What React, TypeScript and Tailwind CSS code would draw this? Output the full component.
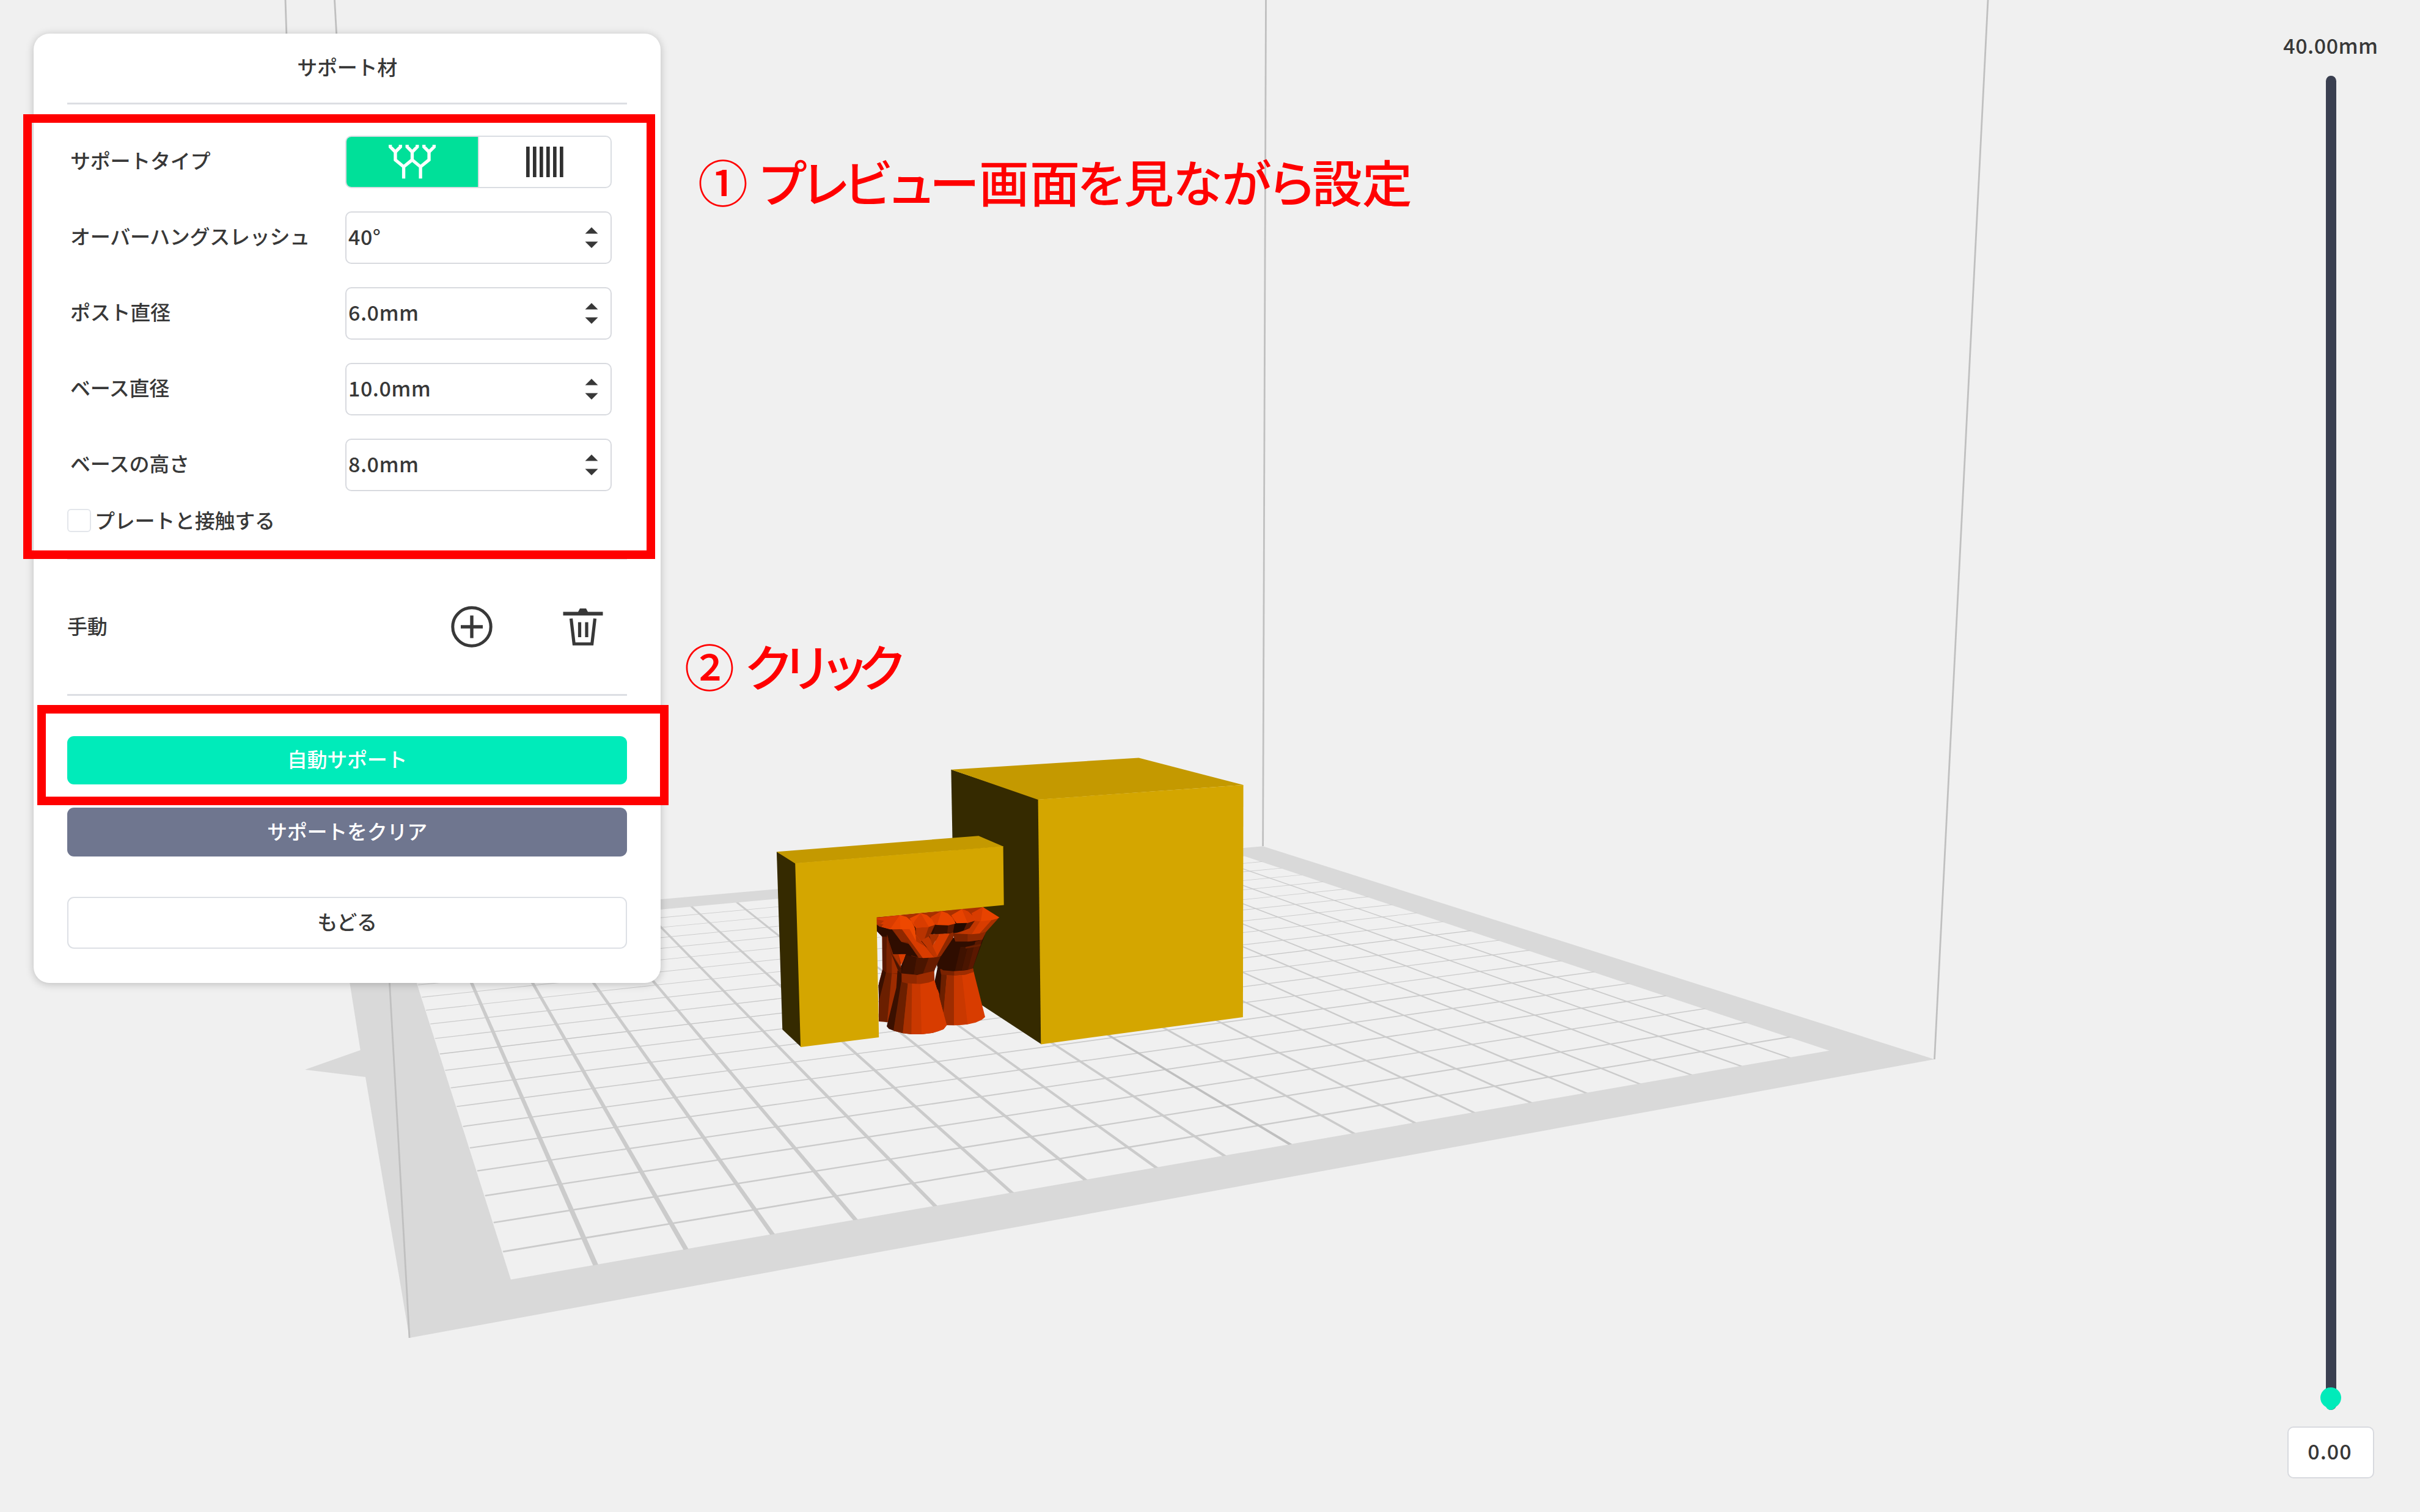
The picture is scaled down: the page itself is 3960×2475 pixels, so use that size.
import React from "react";

type Pt = [number, number];

/* ---------- Build plate perspective ---------- */

const FRONT_LEFT: Pt = [835.9, 2094.4];
const FRONT_RIGHT: Pt = [2993.4, 1719.7];
const BACK_LEFT: Pt = [656, 1527.6];
const BACK_RIGHT: Pt = [2036.4, 1401.6];

/* Foreshortening along the front edge and along the depth axis. */
const G = 0.4382;
const H = 0.8667;

/** Maps grid coordinates (centre line = 0, pitch = 1) to screen positions. */
function plate(u: number, v: number): Pt {
  const s = (u + 9.9) / 19.757;
  const t = (v + 9.88) / 19.76;
  const w = G * s + H * t + 1;
  const axis = (i: 0 | 1) =>
    ((FRONT_RIGHT[i] - FRONT_LEFT[i] + G * FRONT_RIGHT[i]) * s +
      (BACK_LEFT[i] - FRONT_LEFT[i] + H * BACK_LEFT[i]) * t +
      FRONT_LEFT[i]) /
    w;
  return [axis(0), axis(1)];
}

const poly = (...pts: Pt[]) =>
  pts.map(([x, y]) => `${x.toFixed(1)},${y.toFixed(1)}`).join(" ");

const HALF = 0.028;
const EDGE = 9.89;
const STEPS = Array.from({ length: 19 }, (_, i) => i - 9);

function Grid() {
  return (
    <g>
      {STEPS.map((s) => (
        <polygon
          key={`h${s}`}
          fill={s === 0 ? "#c4c4c4" : "#cbcbcb"}
          points={poly(
            plate(-EDGE, s - HALF),
            plate(EDGE, s - HALF),
            plate(EDGE, s + HALF),
            plate(-EDGE, s + HALF)
          )}
        />
      ))}
      {STEPS.map((s) => (
        <polygon
          key={`v${s}`}
          fill={s === 0 ? "#bfbfbf" : "#cbcbcb"}
          points={poly(
            plate(s - HALF, -EDGE),
            plate(s + HALF, -EDGE),
            plate(s + HALF, EDGE),
            plate(s - HALF, EDGE)
          )}
        />
      ))}
    </g>
  );
}

/* ---------- Tree supports under the arch ---------- */

const SUPPORT_SHAPES: [string, string][] = [
  ["#a83000", "42,94 565,42 610,106 560,190 430,190 300,150 42,140"],
  // rear left column
  ["#7a2200", "42,130 100,170 160,260 165,400 130,612 54,606 54,420 72,350 70,190 42,160"],
  ["#2f0d00", "42,130 95,165 92,240 74,350 72,190 42,160"],
  ["#5a1800", "72,190 92,190 92,365 74,350"],
  ["#7a2200", "92,190 118,280 118,370 92,366"],
  ["#9e2c00", "118,275 150,350 148,370 118,370"],
  ["#3a1000", "74,350 90,366 56,520 52,430"],
  ["#6b1f00", "90,366 118,370 98,608 54,604 56,500"],
  ["#9e2c00", "118,370 148,374 140,470 100,610 95,608"],
  // rear right column
  ["#2f0d00", "345,330 372,350 372,500 360,520 328,410"],
  ["#d83c00", "345,350 515,342 576,584 560,598 530,611 490,620 440,625 370,624 340,470"],
  ["#5a1800", "345,350 362,357 372,470 368,500 335,430"],
  ["#6b1f00", "362,357 390,359 372,570 350,480"],
  ["#9e2c00", "390,357 424,357 423,625 370,624 375,520"],
  ["#c93800", "424,357 460,355 490,620 423,625"],
  ["#2f0d00", "345,345 362,352 354,480 330,410"],
  ["#7a2200", "355,350 420,357 515,338 520,362 480,376 420,380 360,376"],
  ["#9e2c00", "424,357 515,340 520,362 480,376 424,380"],
  ["#2f0d00", "330,180 420,195 575,180 515,345 480,355 420,359 370,355 340,335"],
  ["#3f1200", "455,240 490,240 460,356 428,357"],
  ["#4a1500", "490,240 530,225 495,352 460,356"],
  ["#5a1800", "528,214 562,205 515,345 492,352"],
  ["#6b1f00", "480,240 556,226 552,236 480,248"],
  ["#7a2200", "415,172 500,178 582,165 562,205 500,214 430,214"],
  ["#8f2800", "490,176 582,163 562,205 490,214"],
  ["#3a1000", "310,125 430,120 430,172 360,178 300,176"],
  ["#5a1800", "395,125 432,120 424,168 390,174"],
  ["#240a00", "428,115 528,112 500,150 440,170 418,172"],
  ["#5a1800", "490,115 528,112 500,148 470,160"],
  ["#c03600", "528,108 560,108 510,178 420,174 455,168 500,148"],
  ["#d83c00", "555,108 612,104 550,174 510,178"],
  ["#a83000", "612,104 645,95 582,165 550,174"],
  // front branches
  ["#2f0d00", "65,140 180,145 330,130 310,250 340,290 330,345 326,362 240,385 165,380 160,340 175,305 185,275 125,275 95,180 60,175 42,150"],
  ["#4a1500", "95,190 120,280 165,350 165,375 148,355 118,280"],
  ["#a83000", "122,275 150,275 164,345"],
  ["#d83c00", "150,275 188,275 165,330"],
  ["#3a1000", "185,280 240,292 225,377 165,372"],
  ["#4a1500", "240,290 300,292 272,374 225,377"],
  ["#661c00", "300,290 360,282 325,360 270,374"],
  ["#7a2200", "115,150 150,150 258,294 215,285 165,215"],
  ["#8f2800", "120,152 150,150 225,215 165,215"],
  ["#2f0d00", "100,200 165,215 200,225 262,294 185,275 125,275"],
  ["#8f2800", "150,150 180,154 285,294 250,294"],
  ["#b83300", "235,142 325,136 300,190 275,210 238,212"],
  ["#8f2800", "300,140 330,132 305,185 275,210"],
  ["#d83c00", "165,150 210,148 328,292 270,295"],
  ["#b83300", "210,148 235,160 238,212 360,284 325,292"],
  ["#c03600", "262,208 300,188 322,225 350,288 328,290"],
  ["#a83000", "300,178 352,176 318,235"],
  ["#d83c00", "352,176 405,174 342,286 318,235"],
  ["#8f2800", "402,174 420,168 420,195 360,284 340,288"],
  // front column
  ["#9e2c00", "150,375 240,378 326,358 328,410 388,624 372,644 320,662 264,669 214,669 172,664 128,652 160,414"],
  ["#8f2800", "162,370 240,377 240,424 160,414"],
  ["#3a1000", "146,355 166,372 166,416 128,652 104,643 93,630 140,440"],
  ["#6b1f00", "164,412 197,420 172,664 126,652"],
  ["#a83000", "197,418 220,421 216,669 172,664"],
  ["#c93800", "217,420 262,422 268,669 214,669"],
  ["#d83c00", "258,422 300,415 328,404 388,624 372,644 345,655 310,664 264,669"],
  // contact tips
  ["#d83c00", "42,98 155,84 110,115 80,130 46,126"],
  ["#b83300", "42,105 80,112 60,130 46,126"],
  ["#e84300", "565,44 646,95 635,101 610,108 555,114 525,110 510,75"],
  ["#d83c00", "565,44 555,114 528,112 510,75"],
  ["#e84300", "462,54 492,66 515,88 528,110 490,122 435,124 410,85"],
  ["#d83c00", "462,54 490,122 528,110 515,88 492,66"],
  ["#e84300", "362,64 392,75 415,95 432,125 395,134 335,132 312,92"],
  ["#d83c00", "362,64 340,132 322,130 308,95"],
  ["#e84300", "260,74 290,83 315,104 330,132 300,142 235,146 205,100"],
  ["#d83c00", "260,74 300,142 235,146 225,120"],
  ["#e84300", "157,84 190,93 215,115 232,150 205,152 110,154 66,142 95,112"],
  ["#d83c00", "157,84 110,152 66,142 95,112"],
  ["#ee4800", "157,84 190,93 215,115 232,150 236,210 205,152 160,154"],
];

function Scene() {
  return (
    <svg
      className="absolute inset-0"
      width={3960}
      height={2475}
      viewBox="0 0 3960 2475"
    >
      <path
        fill="#d9d9d9"
        fillRule="evenodd"
        d={`M670 2190 L598 1763 L499 1751 L589.7 1719 L558 1518 L2066.6 1385.3 L3165.5 1734 Z
            M${FRONT_LEFT} L${BACK_LEFT} L${BACK_RIGHT} L${FRONT_RIGHT} Z`}
      />
      <Grid />
      <g stroke="#c0c0c0" strokeWidth={2.8}>
        <line x1={670} y1={2190} x2={547.5} y2={0} />
        <line x1={480} y1={400} x2={467} y2={0} />
        <line x1={2066.6} y1={1385} x2={2071.5} y2={0} />
        <line x1={3165.5} y1={1734} x2={3253} y2={0} />
      </g>
      {/* cube */}
      <polygon fill="#352a00" points="1556.4,1259.7 1700,1308 1704,1709.2 1607.6,1646 1563,1616.5" />
      <polygon fill="#c49900" points="1556.4,1259.7 1863.4,1240.4 2034.6,1285 1698.6,1309" />
      <polygon fill="#d4a600" points="1698.6,1308.7 2034.6,1285 2033.9,1665 1703.3,1709.4" />
      {/* supports */}
      <g transform="translate(1420 1470) scale(0.33333)">
        {SUPPORT_SHAPES.map(([fill, points], i) => (
          <polygon key={i} fill={fill} points={points} />
        ))}
      </g>
      {/* arch */}
      <polygon fill="#352a00" points="1270.9,1394.2 1302,1412 1311,1714 1280.3,1685.2" />
      <polygon fill="#c49900" points="1270.9,1394.2 1601.4,1368.2 1641.6,1385.6 1301.2,1413.6" />
      <polygon
        fill="#d4a600"
        points="1301.2,1413.1 1641.6,1385.1 1642.7,1481.4 1434.5,1501.4 1438.2,1698.1 1310.1,1714"
      />
    </svg>
  );
}

/* ---------- Icons ---------- */

function TreeIcon() {
  return (
    <svg width={77} height={56} viewBox="225 64 232 168" fill="none" stroke="#fff" strokeWidth={16}>
      <path d="M233 64V74L258 99L283 74V64M316 64V74L341 99L366 74V64M399 64V74L424 99L449 74V64" />
      <path d="M258 94V138L299 172V230M424 94V138L382 172V230M341 94V138L299 172M341 138L382 172" />
    </svg>
  );
}

function BarsIcon() {
  return (
    <svg width={61} height={50} viewBox="0 0 183 150" fill="#303030">
      {[0, 33, 66, 99, 132, 165].map((x) => (
        <rect key={x} x={x} y={0} width={17} height={150} />
      ))}
    </svg>
  );
}

function PlusIcon() {
  return (
    <svg width={68} height={68} viewBox="0 0 68 68" fill="none" stroke="#383838" strokeWidth={5}>
      <circle cx={34} cy={34} r={31.2} />
      <path d="M34 15.5V52.5M16 34H52" strokeWidth={5.4} />
    </svg>
  );
}

function TrashIcon() {
  return (
    <svg width={66} height={62} viewBox="0 0 66 62" fill="none" stroke="#383838" strokeWidth={5.2}>
      <path d="M0.5 9.5H65.5" strokeWidth={6} />
      <path d="M24 8.5L28 1H38L42 8.5Z" fill="#383838" stroke="none" />
      <path d="M13.5 17.5L18.3 59H47.7L52.5 17.5" />
      <path d="M27.5 23.5V48M39 23.5V48" />
    </svg>
  );
}

function Spinner() {
  return (
    <svg width={22} height={34} viewBox="0 0 22 34" fill="#383838">
      <path d="M11 0L21.5 10.5H0.5ZM11 34L21.5 23.5H0.5Z" />
    </svg>
  );
}

/* ---------- Panel ---------- */

const FIELDS = [
  { label: "オーバーハングスレッシュ", value: "40°" },
  { label: "ポスト直径", value: "6.0mm" },
  { label: "ベース直径", value: "10.0mm" },
  { label: "ベースの高さ", value: "8.0mm" },
];

function Divider() {
  return <div className="h-[3px] shrink-0 bg-[#dcdee3]" />;
}

function SupportPanel() {
  return (
    <section className="absolute left-[55px] top-[55px] flex h-[1554px] w-[1026px] flex-col rounded-[26px] bg-white px-[55px] text-[33px] font-medium leading-none tracking-[-0.25px] text-[#383838] shadow-[0_2px_14px_rgba(0,0,0,0.22)]">
      <h1 className="flex h-[113px] items-center justify-center pb-[4px]">サポート材</h1>
      <Divider />
      <div className="mt-[51px] flex flex-col gap-[38px] pl-[5px] pr-[25px]">
        <div className="flex h-[86px] items-center justify-between">
          <span className="pb-[5px]">サポートタイプ</span>
          <div className="flex h-[86px] w-[436px] overflow-hidden rounded-[10px] border-2 border-[#dadde2]">
            <button className="flex flex-1 items-center justify-center bg-[#00e099]">
              <TreeIcon />
            </button>
            <button className="flex flex-1 items-center justify-center border-l-2 border-[#dadde2]">
              <BarsIcon />
            </button>
          </div>
        </div>
        {FIELDS.map((f) => (
          <div key={f.label} className="flex h-[86px] items-center justify-between">
            <span className="pb-[5px]">{f.label}</span>
            <div className="flex h-[86px] w-[436px] items-center justify-between rounded-[10px] border-2 border-[#d8dadf] pl-[3px] pr-[20px]">
              <span className="pb-[5px] text-[34px] tracking-[0.5px]">{f.value}</span>
              <Spinner />
            </div>
          </div>
        ))}
      </div>
      <label className="mt-[29px] flex h-[38px] items-center gap-[6px]">
        <span className="h-[38px] w-[39px] rounded-[6px] border-2 border-[#e3e6eb]" />
        <span className="pb-[1px]">プレートと接触する</span>
      </label>
      <div className="mt-[42px]">
        <Divider />
      </div>
      <div className="flex h-[220px] items-center pr-[39px]">
        <span className="flex-1 pb-[4px]">手動</span>
        <PlusIcon />
        <span className="ml-[115px]">
          <TrashIcon />
        </span>
      </div>
      <Divider />
      <button className="mt-[66px] h-[79px] rounded-[11px] bg-[#00ebba] pb-[4px] text-white">自動サポート</button>
      <button className="mt-[38px] h-[80px] rounded-[11px] bg-[#6f768f] pb-[4px] text-white">サポートをクリア</button>
      <button className="mt-[66px] h-[85px] rounded-[11px] border-2 border-[#dde0e5] pb-[4px]">もどる</button>
    </section>
  );
}

function LayerSlider() {
  return (
    <aside className="absolute right-[75px] top-[55px] flex w-[142px] flex-col items-center text-[34px] font-medium leading-none text-[#383838]">
      <span className="flex h-[42px] items-center whitespace-nowrap pb-[4px] tracking-[0.5px]">40.00mm</span>
      <div className="relative mt-[27px] h-[2184px] w-[17px] rounded-full bg-[#3a3f50]">
        <div className="absolute bottom-0 left-1/2 h-[30px] w-[17px] -translate-x-1/2 rounded-full bg-[#00ebba]" />
        <div className="absolute bottom-[3px] left-1/2 size-[34px] -translate-x-1/2 rounded-full bg-[#00ebba]" />
      </div>
      <div className="mt-[27px] flex h-[85px] w-full items-center justify-center rounded-[10px] border-2 border-[#d8dadf] bg-white pb-[5px] pr-[3px] tracking-[1px]">
        0.00
      </div>
    </aside>
  );
}

/* ---------- Annotations ---------- */

function Annotations() {
  return (
    <>
      <div className="absolute left-[38px] top-[187px] h-[728px] w-[1034px] border-[14px] border-[#ff0000]" />
      <div className="absolute left-[61px] top-[1154px] h-[164px] w-[1033px] border-[14px] border-[#ff0000]" />
      <p className="absolute left-[1142px] top-[246px] flex items-center whitespace-nowrap text-[82px] font-medium leading-[100px] text-[#ff0000]">
        <span className="w-[97px]">①</span>
        <span className="tracking-[-11.5px]">プレビュ</span>
        <span className="tracking-[-1px]">ー</span>
        <span className="tracking-[1px]">画</span>
        <span className="tracking-[-5px]">面を</span>
        <span className="tracking-[-2px]">見な</span>
        <span className="tracking-[-8px]">がら</span>
        <span>設定</span>
      </p>
      <p className="absolute left-[1120px] top-[1039px] flex items-center whitespace-nowrap text-[82px] font-medium leading-[100px] text-[#ff0000]">
        <span className="w-[97px]">②</span>
        <span className="tracking-[-20px]">クリック</span>
      </p>
    </>
  );
}

export default function App() {
  return (
    <main className="relative h-[2475px] w-[3960px] overflow-hidden bg-[#f0f0f0] font-['Noto_Sans_CJK_JP',sans-serif]">
      <Scene />
      <SupportPanel />
      <LayerSlider />
      <Annotations />
    </main>
  );
}
